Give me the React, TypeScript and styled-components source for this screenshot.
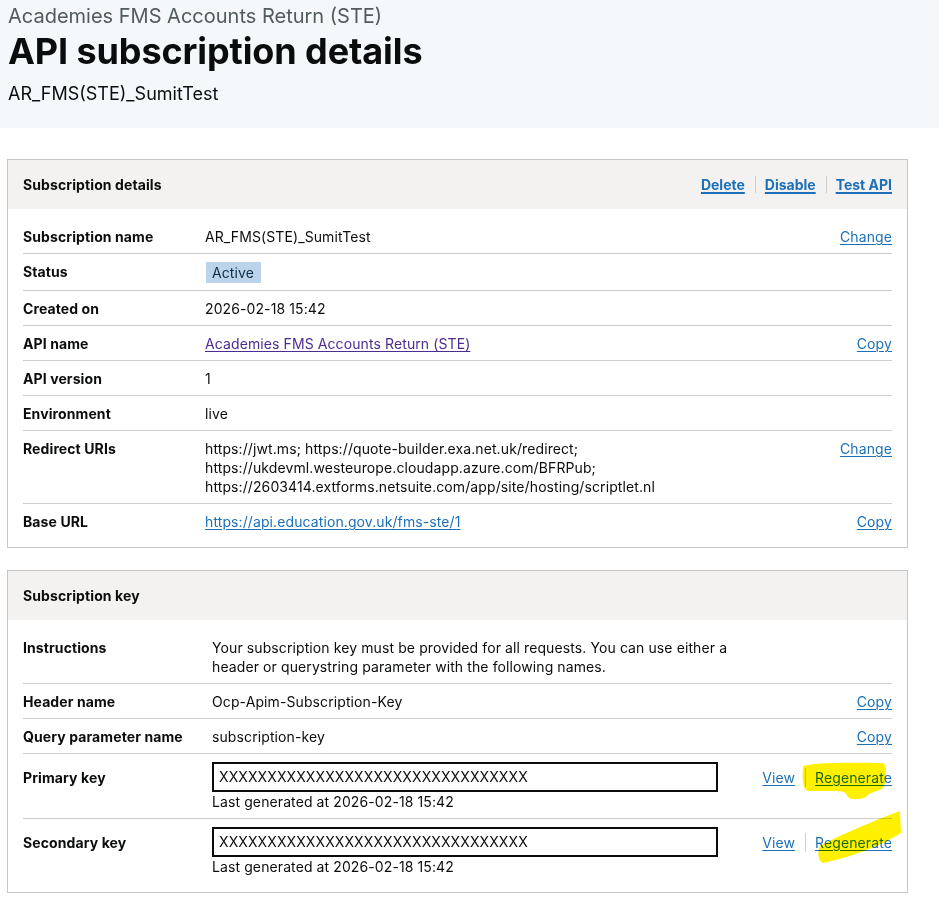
import React from 'react';
import styled, { createGlobalStyle } from 'styled-components';

const GlobalStyle = createGlobalStyle`
  body {
    margin: 0;
    background: #ffffff;
    color: #0b0c0c;
    font-family: Inter, "Noto Sans", "Liberation Sans", sans-serif;
  }
`;

const Page = styled.div`
  position: relative;
  width: 939px;
  min-height: 898px;
`;

const Masthead = styled.header`
  background-color: #f4f8fb;
  height: 128px;
  padding: 4px 8px 0;
  box-sizing: border-box;

  .caption {
    color: #505a5f;
    font-size: 20px;
    line-height: 24px;
    margin: 0;
  }

  h1 {
    font-size: 36px;
    font-weight: 700;
    line-height: 46px;
    margin: 0;
    letter-spacing: -0.1px;
  }

  .subtitle {
    font-size: 18px;
    line-height: 22px;
    margin: 9px 0 0;
  }
`;

const Main = styled.main`
  display: flex;
  flex-direction: column;
  gap: 22px;
  padding: 31px 31px 0 7px;
`;

const Card = styled.section`
  border: 1px solid #c4c6c8;
  background: #ffffff;
`;

const CardHeader = styled.div`
  align-items: center;
  background-color: #f3f2f1;
  display: flex;
  height: 49px;
  justify-content: space-between;
  padding: 0 15px;

  h2 {
    font-size: 14px;
    font-weight: 700;
    letter-spacing: 0.1px;
    margin: 0;
  }
`;

const CardBody = styled.div`
  padding: 10px 15px 9px;
`;

const Row = styled.div<{ $label: number; $action: string }>`
  border-bottom: 1px solid #cecfd0;
  display: grid;
  font-size: 14px;
  letter-spacing: 0.1px;
  grid-template-columns: ${(p) => p.$label}px 1fr ${(p) => p.$action};
  line-height: 19px;
  padding: 8px 0 7px;

  &:last-child {
    border-bottom: none;
  }
`;

const Label = styled.div<{ $offset?: number }>`
  font-weight: 700;
  padding-top: ${(p) => p.$offset || 0}px;
`;

const Value = styled.div`
  padding-right: 12px;
`;

const Actions = styled.div<{ $offset?: number }>`
  display: flex;
  justify-content: flex-end;
  align-items: flex-start;
  padding-top: ${(p) => p.$offset || 0}px;
`;

const ActionLink = styled.a<{ $bold?: boolean; $visited?: boolean }>`
  color: ${(p) => (p.$visited ? '#4c2c92' : '#1d70b8')};
  font-size: 14px;
  font-weight: ${(p) => (p.$bold ? 700 : 400)};
  text-decoration: underline;
  text-underline-offset: 2px;
  text-decoration-thickness: ${(p) => (p.$bold ? 2 : 1)}px;
  cursor: pointer;

  & + & {
    border-left: 1px solid #cecfd0;
    margin-left: ${(p) => (p.$bold ? 8 : 10)}px;
    padding-left: ${(p) => (p.$bold ? 7 : 9)}px;
  }
`;

const Tag = styled.span`
  background-color: #bbd4ea;
  color: #0c2d4a;
  display: inline-block;
  line-height: 19px;
  margin-left: 1px;
  padding: 1px 7px 1px 6px;
`;

const KeyBox = styled.div`
  border: 2px solid #0b0c0c;
  box-sizing: border-box;
  height: 30px;
  line-height: 26px;
  padding: 0 5px;
  width: 506px;
`;

const Highlights = styled.svg`
  left: 0;
  mix-blend-mode: multiply;
  pointer-events: none;
  position: absolute;
  top: 0;
`;

type Item = {
  label: string;
  value: React.ReactNode;
  actions?: { text: string; visited?: boolean }[];
  labelOffset?: number;
  actionOffset?: number;
};

const detailRows: Item[] = [
  { label: 'Subscription name', value: 'AR_FMS(STE)_SumitTest', actions: [{ text: 'Change' }] },
  { label: 'Status', value: <Tag>Active</Tag> },
  { label: 'Created on', value: '2026-02-18 15:42' },
  {
    label: 'API name',
    value: <ActionLink $visited>Academies FMS Accounts Return (STE)</ActionLink>,
    actions: [{ text: 'Copy' }],
  },
  { label: 'API version', value: '1' },
  { label: 'Environment', value: 'live' },
  {
    label: 'Redirect URIs',
    value:
      'https://jwt.ms; https://quote-builder.exa.net.uk/redirect; https://ukdevml.westeurope.cloudapp.azure.com/BFRPub; https://2603414.extforms.netsuite.com/app/site/hosting/scriptlet.nl',
    actions: [{ text: 'Change' }],
  },
  {
    label: 'Base URL',
    value: <ActionLink>https://api.education.gov.uk/fms-ste/1</ActionLink>,
    actions: [{ text: 'Copy' }],
  },
];

const keyValue = (
  <>
    <KeyBox>XXXXXXXXXXXXXXXXXXXXXXXXXXXXXXXX</KeyBox>
    <div>Last generated at 2026-02-18 15:42</div>
  </>
);

const keyRows: Item[] = [
  {
    label: 'Instructions',
    value:
      'Your subscription key must be provided for all requests. You can use either a header or querystring parameter with the following names.',
  },
  { label: 'Header name', value: 'Ocp-Apim-Subscription-Key', actions: [{ text: 'Copy' }] },
  { label: 'Query parameter name', value: 'subscription-key', actions: [{ text: 'Copy' }] },
  {
    label: 'Primary key',
    value: keyValue,
    actions: [{ text: 'View' }, { text: 'Regenerate' }],
    labelOffset: 6,
    actionOffset: 6,
  },
  {
    label: 'Secondary key',
    value: keyValue,
    actions: [{ text: 'View' }, { text: 'Regenerate' }],
    labelOffset: 6,
    actionOffset: 6,
  },
];

const SummaryRows: React.FC<{ items: Item[]; label: number; action: string }> = ({
  items,
  label,
  action,
}) => (
  <CardBody>
    {items.map((item) => (
      <Row key={item.label} $label={label} $action={action}>
        <Label $offset={item.labelOffset}>{item.label}</Label>
        <Value>{item.value}</Value>
        <Actions $offset={item.actionOffset}>
          {item.actions?.map((a) => (
            <ActionLink key={a.text}>{a.text}</ActionLink>
          ))}
        </Actions>
      </Row>
    ))}
  </CardBody>
);

const App: React.FC = () => (
  <Page>
    <GlobalStyle />
    <Masthead>
      <p className="caption">Academies FMS Accounts Return (STE)</p>
      <h1>API subscription details</h1>
      <p className="subtitle">AR_FMS(STE)_SumitTest</p>
    </Masthead>

    <Main>
      <Card>
        <CardHeader>
          <h2>Subscription details</h2>
          <Actions>
            <ActionLink $bold>Delete</ActionLink>
            <ActionLink $bold>Disable</ActionLink>
            <ActionLink $bold>Test API</ActionLink>
          </Actions>
        </CardHeader>
        <SummaryRows items={detailRows} label={182} action="auto" />
      </Card>

      <Card>
        <CardHeader>
          <h2>Subscription key</h2>
        </CardHeader>
        <SummaryRows items={keyRows} label={189} action="140px" />
      </Card>
    </Main>

    {/* yellow highlighter marks drawn over the screenshot */}
    <Highlights width="939" height="898" viewBox="0 0 939 898">
      <path
        d="M803,767 C803,763 840,762 883,763 C887,764 887,784 882,789 C875,792 868,793 866,797 C860,800 850,800 848,797 C846,793 845,791 835,791 L808,791 C803,790 802,780 803,767 Z"
        fill="#fff000"
      />
      <path
        d="M820,846 C835,838 860,826 900,811 L901,833 C880,846 855,856 823,863 C818,861 817,852 820,846 Z"
        fill="#fff000"
      />
    </Highlights>
  </Page>
);

export default App;
